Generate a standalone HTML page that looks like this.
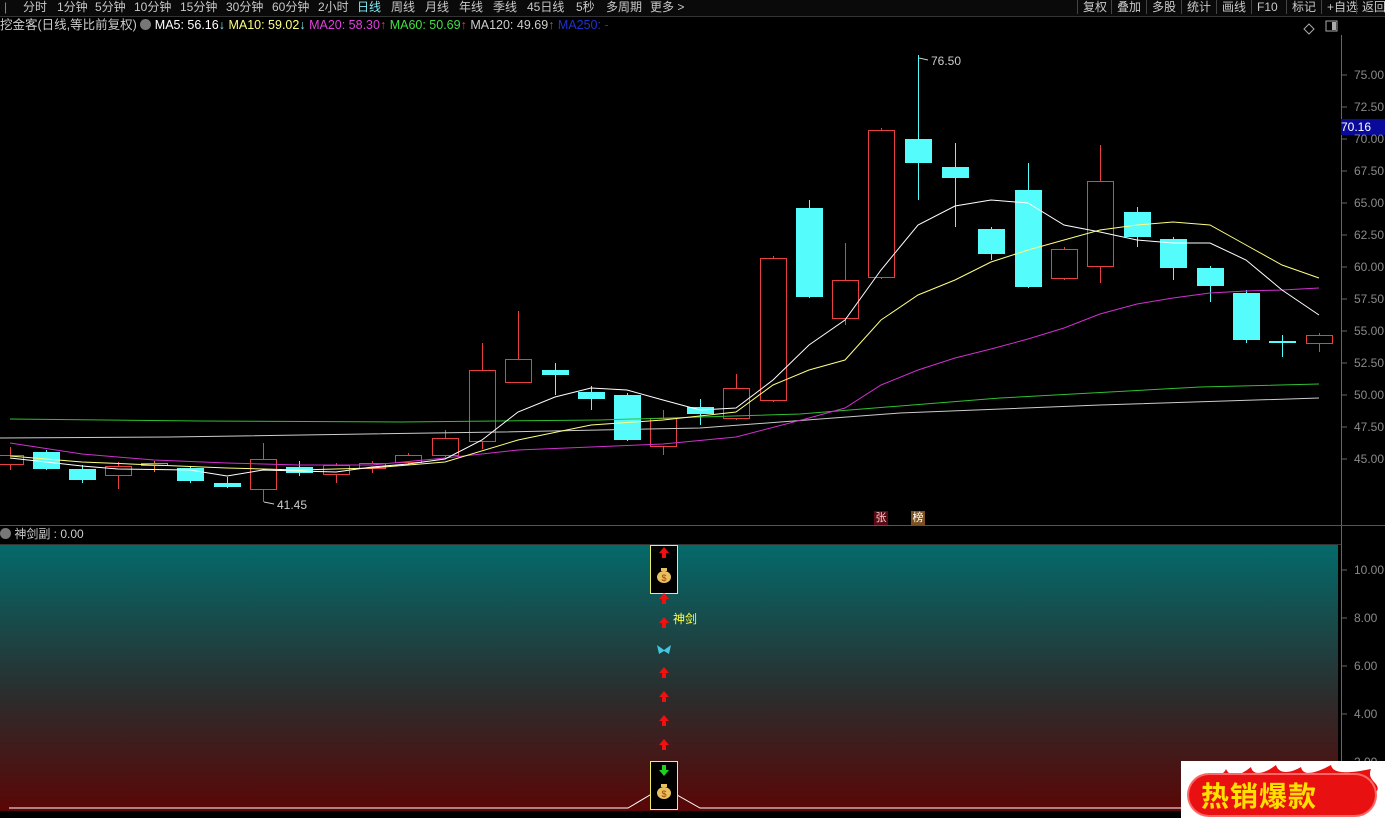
<!DOCTYPE html>
<html><head><meta charset="utf-8"><style>
body{margin:0;background:#000;width:1385px;height:818px;overflow:hidden;font-family:"Liberation Sans","Noto Sans CJK SC",sans-serif;position:relative}
.tb{position:absolute;top:0;left:0;width:1385px;height:16px;background:#0a0a0a;border-bottom:1px solid #333;font-size:12px;color:#c8c8c8;white-space:nowrap}
.tb span{position:absolute;top:0;line-height:14px}
.r span{border-left:1px solid #444;padding-left:5px}
.info{position:absolute;top:17px;left:0;font-size:12.5px;line-height:17px;white-space:nowrap;color:#ddd}
.ax{position:absolute;left:1354px;font-size:12px;color:#8a8a8a}
svg{position:absolute;left:0;top:0}
</style></head><body>
<div class="tb">
<span style="left:4px;color:#888">|</span>
<span style="left:23px">分时</span><span style="left:57px">1分钟</span><span style="left:95px">5分钟</span><span style="left:134px">10分钟</span><span style="left:180px">15分钟</span><span style="left:226px">30分钟</span><span style="left:272px">60分钟</span><span style="left:318px">2小时</span><span style="left:357px;color:#7fe6f0">日线</span><span style="left:391px">周线</span><span style="left:425px">月线</span><span style="left:459px">年线</span><span style="left:493px">季线</span><span style="left:527px">45日线</span><span style="left:576px">5秒</span><span style="left:606px">多周期</span><span style="left:650px">更多 &gt;</span>
<div class="r"><span style="left:1077px">复权</span><span style="left:1111px">叠加</span><span style="left:1146px">多股</span><span style="left:1181px">统计</span><span style="left:1216px">画线</span><span style="left:1251px">F10</span><span style="left:1286px">标记</span><span style="left:1321px">+自选</span><span style="left:1356px">返回</span></div>
</div>
<div class="info"><span style="color:#ccc">挖金客(日线,等比前复权)</span> <span style="display:inline-block;width:11px;height:11px;border-radius:50%;background:#777;vertical-align:-1px"></span> <span style="color:#fff">MA5: 56.16</span><span style="color:#7fe6f0">↓</span> <span style="color:#ffff80">MA10: 59.02</span><span style="color:#7fe6f0">↓</span> <span style="color:#e040e0">MA20: 58.30</span><span style="color:#f33">↑</span> <span style="color:#40e040">MA60: 50.69</span><span style="color:#f33">↑</span> <span style="color:#ccc">MA120: 49.69</span><span style="color:#f33">↑</span> <span style="color:#2030d0">MA250: -</span></div>
<div style="position:absolute;left:0;top:527px;font-size:12px;color:#ccc;line-height:14px"><span style="display:inline-block;width:11px;height:11px;border-radius:50%;background:#777;vertical-align:-1px"></span> 神剑副 : 0.00</div>
<div style="position:absolute;left:0;top:545px;width:1338px;height:266px;background:linear-gradient(#046a6a,#2a2e2e 55%,#5a0606)"></div>
<svg width="1385" height="818" id="s"></svg>
<div style="position:absolute;left:1341px;top:119px;width:44px;height:16px;background:#0a0a9a;color:#fff;font-size:12px;line-height:16px">70.16</div>
<div class="ax" style="top:68px">75.00</div><div class="ax" style="top:100px">72.50</div><div class="ax" style="top:132px">70.00</div><div class="ax" style="top:164px">67.50</div><div class="ax" style="top:196px">65.00</div><div class="ax" style="top:228px">62.50</div><div class="ax" style="top:260px">60.00</div><div class="ax" style="top:292px">57.50</div><div class="ax" style="top:324px">55.00</div><div class="ax" style="top:356px">52.50</div><div class="ax" style="top:388px">50.00</div><div class="ax" style="top:420px">47.50</div><div class="ax" style="top:452px">45.00</div>
<div class="ax" style="top:563px">10.00</div><div class="ax" style="top:611px">8.00</div><div class="ax" style="top:659px">6.00</div><div class="ax" style="top:707px">4.00</div><div class="ax" style="top:755px">2.00</div>
<div style="position:absolute;left:931px;top:54px;font-size:12px;color:#ccc">76.50</div>
<div style="position:absolute;left:277px;top:498px;font-size:12px;color:#ccc">41.45</div>
<div style="position:absolute;left:874px;top:511px;width:14px;height:14px;background:#5a0a14;color:#fcc;font-size:11px;line-height:14px;text-align:center">张</div>
<div style="position:absolute;left:911px;top:511px;width:14px;height:14px;background:#7a5020;color:#fff;font-size:11px;line-height:14px;text-align:center">榜</div>
<div style="position:absolute;left:673px;top:610px;font-size:12px;color:#ffff40">神剑</div>
<div style="position:absolute;left:1181px;top:761px;width:204px;height:57px;background:#fff;overflow:hidden">
<svg width="204" height="57" style="position:absolute;left:0;top:0"><path d="M10 30 C20 10,40 20,45 8 C50 18,60 14,70 6 C72 16,85 12,95 4 C98 14,110 12,120 6 C122 16,135 12,150 4 C152 14,170 12,190 8 C185 20,200 22,196 30 Z" fill="#e81010"/></svg>
<div style="position:absolute;left:8px;top:14px;width:186px;height:40px;border-radius:20px;background:#e81010;box-shadow:0 0 0 2px #f66"></div><div style="position:absolute;left:20px;top:16px;font-size:28px;font-weight:bold;color:#ffe000;letter-spacing:1px;font-family:'Noto Sans CJK SC',sans-serif;line-height:36px">热销爆款</div></div>
<script>
var s=document.getElementById('s'),h='';
function L(x1,y1,x2,y2,c){h+='<line x1="'+x1+'" y1="'+y1+'" x2="'+x2+'" y2="'+y2+'" stroke="'+c+'" stroke-width="1"/>';}
L(0,16.5,1385,16.5,'#333');L(1341.5,35,1341.5,818,'#666');L(0,525.5,1385,525.5,'#555');L(0,544.5,1341,544.5,'#333');
[75,107,139,171,203,235,267,299,331,363,395,427,459,570,618,666,714,762].forEach(function(y){L(1341,y,1347,y,'#666')});
h+='<path d="M1309 24l5 5-5 5-5-5z" fill="none" stroke="#aaa"/><rect x="1326" y="21" width="11" height="10" fill="none" stroke="#aaa"/><rect x="1332" y="22" width="4" height="8" fill="#aaa"/>';
var C=[[10,'r',455,464,447,470],[46,'c',452,469,450,470],[82,'c',469,480,465,483],[118,'r',466,475,462,489],[154,'o',463,465,461,472],[190,'c',468,481,466,483],[227,'c',483,487,477,488],[263,'r',459,489,443,502],[299,'c',467,473,461,476],[336,'r',465,474,463,483],[372,'r',463,468,461,473],[408,'r',455,462,453,464],[445,'r',438,455,430,457],[482,'r',370,441,343,449],[518,'r',359,382,311,382],[555,'c',370,375,363,395],[591,'c',392,399,386,410],[627,'c',395,440,393,441],[663,'r',418,446,410,455],[700,'c',407,414,399,425],[736,'r',388,418,374,420],[773,'r',258,400,256,402],[809,'c',208,297,200,298],[845,'r',280,318,243,325],[881,'r',130,277,128,279],[918,'c',139,163,55,200],[955,'c',167,178,143,227],[991,'c',229,254,227,260],[1028,'c',190,287,163,288],[1064,'r',249,278,247,280],[1100,'r',181,266,145,283],[1137,'c',212,237,207,247],[1173,'c',239,268,237,280],[1210,'c',268,286,266,302],[1246,'c',293,340,290,343],[1282,'c',341,343,335,357],[1319,'r',335,343,333,352]];
C.forEach(function(c){var x=c[0],col=c[1]=='c'?'#54fcfc':(c[1]=='o'?'#f08020':'#e84040');
L(x+.5,c[4],x+.5,c[2],col);L(x+.5,c[3],x+.5,c[5],col);
if(c[1]=='c')h+='<rect x="'+(x-13)+'" y="'+c[2]+'" width="27" height="'+Math.max(c[3]-c[2],2)+'" fill="'+col+'"/>';
else h+='<rect x="'+(x-12.5)+'" y="'+(c[2]+.5)+'" width="26" height="'+Math.max(c[3]-c[2],1)+'" fill="none" stroke="'+col+'"/>';});
function P(p,c){h+='<polyline fill="none" stroke="'+c+'" stroke-width="1" points="'+p+'"/>';}
P('0,438 170,437 500,432 700,428 900,413 1100,405 1319,398','#ccc');
P('10,419 200,421 400,422 600,420 800,414 1000,398 1200,387 1319,384','#30c030');
P('10,443 82,454 154,460 227,463 299,465 372,465 445,458 518,450 591,447 663,444 736,437 809,418 845,408 881,385 918,370 955,358 991,349 1028,339 1064,328 1100,314 1137,304 1173,298 1210,293 1246,291 1282,290 1319,288','#d030d0');
P('10,456 82,462 154,465 227,468 299,470 372,468 445,462 518,440 591,425 663,420 736,412 773,385 809,370 845,360 881,320 918,295 955,280 991,262 1028,250 1064,240 1100,230 1137,225 1173,222 1210,225 1246,245 1282,265 1319,278','#ffff80');
P('10,458 46,462 82,466 118,469 190,470 227,476 263,470 299,471 336,472 372,467 408,464 445,459 482,440 518,412 555,397 591,388 627,390 663,400 700,410 736,408 773,380 809,345 845,320 881,270 918,225 955,206 991,200 1028,203 1064,225 1100,232 1137,240 1173,243 1210,243 1246,260 1282,290 1319,315','#fff');
L(919,58,928,60,'#ccc');L(264,502,274,504,'#ccc');
P('9,808 628,808 650,795 677,795 700,808 1338,808','#fff');
h+='<rect x="650.5" y="545.5" width="27" height="48" fill="#000" stroke="#ee6"/><rect x="650.5" y="761.5" width="27" height="48" fill="#000" stroke="#ee6"/>';
function up(x,y){h+='<path d="M'+x+' '+(y-6)+'l-5 6h3v5h4v-5h3z" fill="#f01010"/>';}
[552,598,622,672,696,720,744].forEach(function(y){up(664,y+1)});
h+='<path d="M664 776l-5-6h3v-5h4v5h3z" fill="#20d020"/>';
h+='<path d="M664 650l-7-5 2 9 5-3 5 3 2-9z" fill="#40c8e0"/>';
[577,793].forEach(function(y){h+='<ellipse cx="664" cy="'+y+'" rx="7" ry="6" fill="#e8c060"/><rect x="661" y="'+(y-9)+'" width="6" height="3" fill="#e8c060"/><text x="664" y="'+(y+4)+'" font-size="9" text-anchor="middle" fill="#a04000" font-family="Liberation Sans">$</text>'});
s.innerHTML=h;
</script>
</body></html>
